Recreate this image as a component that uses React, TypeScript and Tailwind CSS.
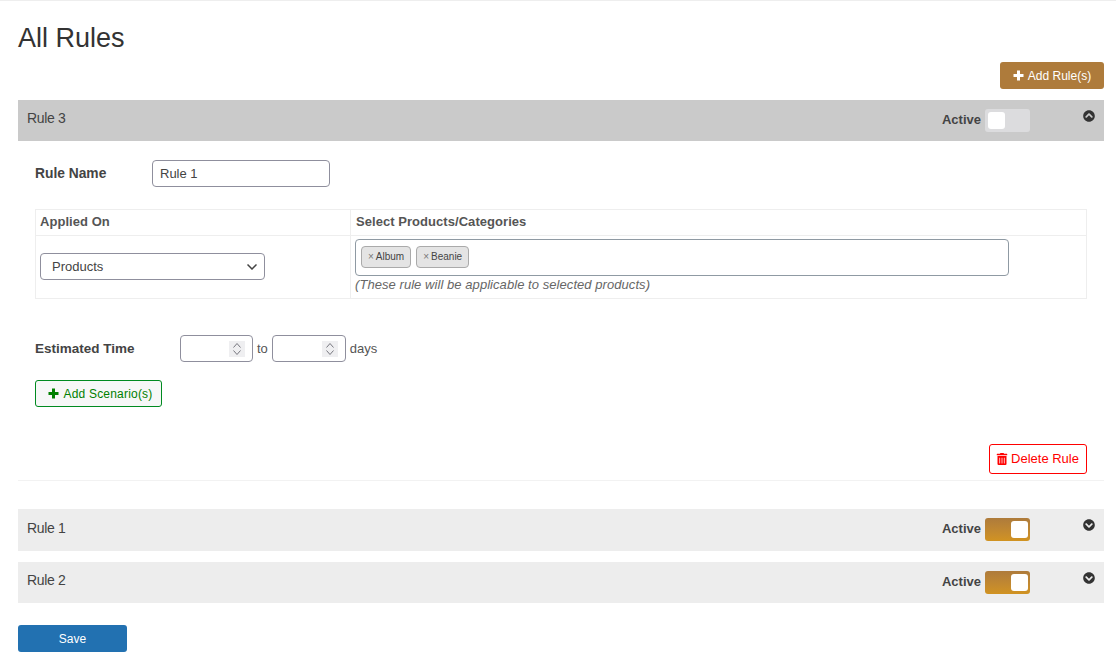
import { FaChevronCircleDown, FaChevronCircleUp, FaTrashAlt } from "react-icons/fa";

function Plus() {
  return (
    <svg width="11" height="11" viewBox="0 0 11 11" fill="currentColor">
      <path d="M4 .5h3V4h3.5v3H7v3.5H4V7H.5V4H4z" />
    </svg>
  );
}

function Toggle({ on }: { on: boolean }) {
  return (
    <span
      className={`flex h-[23px] w-[45px] rounded-[3px] py-[3px] ${
        on ? "justify-end bg-gradient-to-b from-[#ae7b3b] to-[#d19321] pr-[2px]" : "justify-start bg-[#dcdcde] pl-[3px]"
      }`}
    >
      <span className="h-[17px] w-[17px] rounded-[3px] bg-white" />
    </span>
  );
}

function RuleHeader({ name, open, tall }: { name: string; open: boolean; tall?: boolean }) {
  return (
    <div
      className={`flex items-start pl-[9px] pr-[9px] ${tall ? "h-[42px]" : "h-[41px]"} ${
        open ? "bg-[#cacaca]" : "bg-[#ededed]"
      }`}
    >
      <span className={`text-[14px] leading-[16px] tracking-[-0.35px] text-[#444] ${tall ? "mt-[11px]" : "mt-[10px]"}`}>
        {name}
      </span>
      <span className="ml-auto mt-[9px] flex items-center gap-[4px]">
        <span className="pb-[2px] text-[13px] font-bold leading-[20px] text-[#444]">Active</span>
        <Toggle on={!open} />
      </span>
      <span className="ml-[53px] mt-[10px] text-[12px] text-[#333]">
        {open ? <FaChevronCircleUp /> : <FaChevronCircleDown />}
      </span>
    </div>
  );
}

function Spin({ wide }: { wide?: boolean }) {
  return (
    <span
      className={`flex h-[27px] items-center justify-end rounded-[4px] border border-[#8f8f9d] pr-[7px] ${
        wide ? "w-[74px]" : "w-[73px]"
      }`}
    >
      <span className="flex h-[16px] w-[16px] flex-col items-center justify-center gap-[2px] bg-[#efeff1]">
        <svg width="8" height="5" viewBox="0 0 8 5" fill="none" stroke="#77777f">
          <path d="M.5 4.5l3.5-4 3.5 4" />
        </svg>
        <svg width="8" height="5" viewBox="0 0 8 5" fill="none" stroke="#77777f">
          <path d="M.5.5l3.5 4 3.5-4" />
        </svg>
      </span>
    </span>
  );
}

function Tag({ label }: { label: string }) {
  return (
    <span className="flex h-[22px] items-center gap-[2px] rounded-[4px] border border-[#aaa] bg-[#e4e4e4] px-[6px] text-[10px] text-[#444]">
      <span className="text-[#777]">×</span>
      {label}
    </span>
  );
}

export default function App() {
  return (
    <div className="h-[652px] w-[1116px] overflow-hidden border-t border-[#eeeeee] bg-white px-[18px] pr-[12px] font-['Liberation_Sans',Arial,sans-serif] text-[13px] text-[#444]">
      <h1 className="mt-[21px] text-[27px] font-normal leading-[32px] text-[#333]">All Rules</h1>

      <div className="mt-[8px] flex justify-end">
        <button className="flex h-[27px] w-[104px] items-center justify-center gap-[4px] rounded-[3px] bg-[#ae7b3b] text-[12px] text-white">
          <Plus />
          Add Rule(s)
        </button>
      </div>

      <div className="mt-[11px]">
        <RuleHeader name="Rule 3" open />
        <div className="h-[340px] border-b border-[#f2f2f2] pl-[17px] pr-[17px]">
          <div className="flex items-center pt-[19px]">
            <span className="w-[117px] pt-[1px] text-[13.8px] font-bold text-[#444]">Rule Name</span>
            <input
              defaultValue="Rule 1"
              className="h-[27px] w-[178px] rounded-[4px] border border-[#8f8f9d] px-[7px] text-[13px] text-[#444] outline-none"
            />
          </div>

          <table className="mt-[22px] w-full border-collapse border border-[#eeeeee]">
            <thead>
              <tr className="h-[26px]">
                <th className="w-[315px] border border-[#eeeeee] px-[4px] pb-[2px] text-left text-[13px] font-bold tracking-[0.05px] text-[#555]">
                  Applied On
                </th>
                <th className="border border-[#eeeeee] px-[5px] pb-[2px] text-left text-[13px] font-bold tracking-[0.05px] text-[#555]">
                  Select Products/Categories
                </th>
              </tr>
            </thead>
            <tbody>
              <tr className="h-[63px]">
                <td className="border border-[#eeeeee] px-[4px] pb-[2px] align-middle">
                  <div className="relative w-[225px]">
                    <select className="h-[27px] w-full appearance-none rounded-[4px] border border-[#8f8f9d] bg-white pl-[11px] pt-[1px] text-[13px] text-[#444] outline-none">
                      <option>Products</option>
                    </select>
                    <svg
                      className="absolute right-[8px] top-[11px]"
                      width="10"
                      height="6"
                      viewBox="0 0 10 6"
                      fill="none"
                      stroke="#444"
                      strokeWidth="1.5"
                    >
                      <path d="M.5.5l4.5 4.5 4.5-4.5" />
                    </svg>
                  </div>
                </td>
                <td className="border border-[#eeeeee] px-[4px] align-top">
                  <div className="mt-[3px] flex h-[37px] w-[654px] items-center gap-[5px] rounded-[4px] border border-[#8f9aa3] pb-[2px] pl-[5px]">
                    <Tag label="Album" />
                    <Tag label="Beanie" />
                  </div>
                  <p className="mt-[1px] text-[13px] italic leading-[16px] tracking-[0.06px] text-[#666]">
                    (These rule will be applicable to selected products)
                  </p>
                </td>
              </tr>
            </tbody>
          </table>

          <div className="mt-[36px] flex items-center text-[#555]">
            <span className="w-[145px] pt-[1px] text-[13.5px] font-bold text-[#444]">Estimated Time</span>
            <Spin />
            <span className="mx-[4px]">to</span>
            <Spin wide />
            <span className="ml-[4px]">days</span>
          </div>

          <button className="mt-[18px] flex h-[27px] w-[127px] items-center justify-center gap-[4px] rounded-[3px] border border-[#008a20] bg-[#f6f7f7] pl-[4px] text-[12px] tracking-[0.2px] text-[#008000]">
            <Plus />
            Add Scenario(s)
          </button>

          <div className="mt-[37px] flex justify-end">
            <button className="flex h-[30px] w-[98px] items-center justify-center gap-[3px] rounded-[3px] border border-[#ff0000] pr-[1px] text-[13px] text-[#ff0000]">
              <FaTrashAlt className="text-[12px]" />
              Delete Rule
            </button>
          </div>
        </div>
      </div>

      <div className="mt-[28px]">
        <RuleHeader name="Rule 1" open={false} tall />
      </div>
      <div className="mt-[11px]">
        <RuleHeader name="Rule 2" open={false} />
      </div>

      <button className="mt-[22px] h-[27px] w-[109px] rounded-[3px] bg-[#2271b1] text-[12px] text-white">Save</button>
    </div>
  );
}
